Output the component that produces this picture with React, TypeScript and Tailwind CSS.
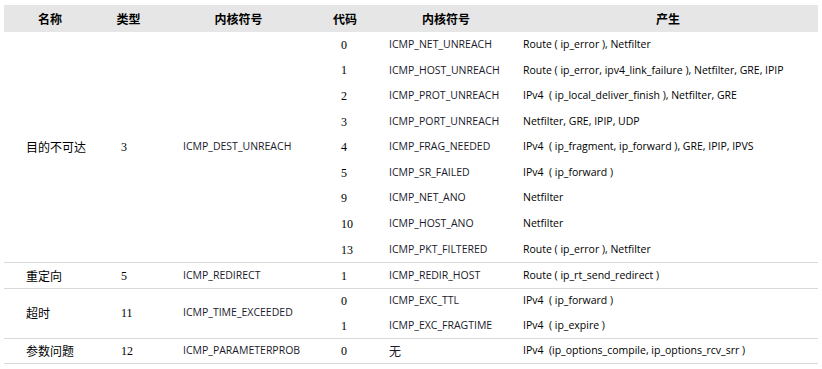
import React from "react";

type Sub = { code: string; sym: string; prod: string };
type Group = { name: string; type: string; sym: string; rows: Sub[]; rowH: string };

const groups: Group[] = [
  {
    name: "目的不可达",
    type: "3",
    sym: "ICMP_DEST_UNREACH",
    rowH: "h-[25.6px]",
    rows: [
      { code: "0", sym: "ICMP_NET_UNREACH", prod: "Route ( ip_error ), Netfilter" },
      { code: "1", sym: "ICMP_HOST_UNREACH", prod: "Route ( ip_error, ipv4_link_failure ), Netfilter, GRE, IPIP" },
      { code: "2", sym: "ICMP_PROT_UNREACH", prod: "IPv4  ( ip_local_deliver_finish ), Netfilter, GRE" },
      { code: "3", sym: "ICMP_PORT_UNREACH", prod: "Netfilter, GRE, IPIP, UDP" },
      { code: "4", sym: "ICMP_FRAG_NEEDED", prod: "IPv4  ( ip_fragment, ip_forward ), GRE, IPIP, IPVS" },
      { code: "5", sym: "ICMP_SR_FAILED", prod: "IPv4  ( ip_forward )" },
      { code: "9", sym: "ICMP_NET_ANO", prod: "Netfilter" },
      { code: "10", sym: "ICMP_HOST_ANO", prod: "Netfilter" },
      { code: "13", sym: "ICMP_PKT_FILTERED", prod: "Route ( ip_error ), Netfilter" },
    ],
  },
  {
    name: "重定向",
    type: "5",
    sym: "ICMP_REDIRECT",
    rowH: "h-[24.5px]",
    rows: [{ code: "1", sym: "ICMP_REDIR_HOST", prod: "Route ( ip_rt_send_redirect )" }],
  },
  {
    name: "超时",
    type: "11",
    sym: "ICMP_TIME_EXCEEDED",
    rowH: "h-[24.5px]",
    rows: [
      { code: "0", sym: "ICMP_EXC_TTL", prod: "IPv4  ( ip_forward )" },
      { code: "1", sym: "ICMP_EXC_FRAGTIME", prod: "IPv4  ( ip_expire )" },
    ],
  },
  {
    name: "参数问题",
    type: "12",
    sym: "ICMP_PARAMETERPROB",
    rowH: "h-[24.5px]",
    rows: [{ code: "0", sym: "无", prod: "IPv4  (ip_options_compile, ip_options_rcv_srr )" }],
  },
];

const cjk = "font-['Noto_Sans_CJK_SC',sans-serif]";
const lat = "font-['Open_Sans','Noto_Sans_CJK_SC',sans-serif]";
const num = "font-['Liberation_Serif',serif]";

export default function App() {
  return (
    <div className="w-[822px] h-[369px] bg-white pt-[5px] pl-[4px] text-black">
      <div className="w-[814px]">
        <div className={`flex h-[27px] items-center bg-[#e6e6e6] text-[12px] font-bold ${cjk}`}>
          <div className="w-[92px] text-center">名称</div>
          <div className="w-[65px] text-center">类型</div>
          <div className="w-[155px] text-center">内核符号</div>
          <div className="w-[58px] text-center">代码</div>
          <div className="w-[144px] text-center">内核符号</div>
          <div className="w-[300px] text-center">产生</div>
        </div>
        {groups.map((g, gi) => (
          <div key={gi} className={`flex ${gi > 0 ? "border-t border-[#d9d9d9]" : ""} border-b-0`}>
            <div className={`w-[92px] pl-[22px] flex items-center text-[12px] ${cjk}`}>{g.name}</div>
            <div className={`w-[65px] pl-[25px] flex items-center text-[12px] ${num}`}>{g.type}</div>
            <div className={`w-[155px] pl-[22px] flex items-center text-[10.5px] text-[#1a1a2a] ${lat}`}>{g.sym}</div>
            <div className="flex flex-col">
              {g.rows.map((r, ri) => (
                <div key={ri} className={`flex items-center ${g.rowH}`}>
                  <div className={`w-[58px] pl-[25px] text-[12px] ${num}`}>{r.code}</div>
                  <div className={`w-[144px] pl-[15px] ${r.sym === "无" ? `text-[12px] ${cjk}` : `text-[10.5px] ${lat}`} text-[#1a1a2a]`}>{r.sym}</div>
                  <div className={`w-[300px] pl-[5px] text-[10.5px] whitespace-pre ${lat}`}>{r.prod}</div>
                </div>
              ))}
            </div>
          </div>
        ))}
        <div className="border-t border-[#d9d9d9]" />
      </div>
    </div>
  );
}
